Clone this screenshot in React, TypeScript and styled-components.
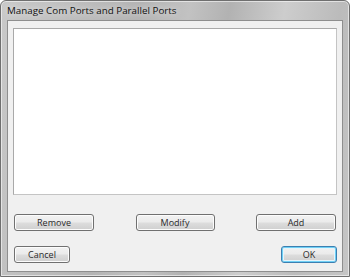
import styled, { createGlobalStyle } from 'styled-components';

const GlobalStyle = createGlobalStyle`
  html, body {
    margin: 0;
    padding: 0;
    background: #ffffff;
  }
  body {
    font-family: "Open Sans", "Noto Sans", "Liberation Sans", sans-serif;
  }
`;

const Window = styled.div`
  width: 350px;
  height: 277px;
  box-sizing: border-box;
  display: flex;
  flex-direction: column;
  border: 1px solid #6f6f6f;
  border-radius: 6px 6px 0 0;
  background: linear-gradient(
    100deg,
    #c9c9c9 0%,
    #bdbdbd 20%,
    #b4b4b4 35%,
    #c2c2c2 48%,
    #b2b2b2 58%,
    #cdcdcd 72%,
    #bbbbbb 86%,
    #c6c6c6 100%
  );
  box-shadow: inset 0 0 0 1px rgba(255, 255, 255, 0.55);
  padding: 0 6px 4px 6px;
`;

const TitleBar = styled.div`
  height: 21px;
  display: flex;
  align-items: center;
  font-size: 9.8px;
  color: #111111;
  text-shadow: 0 0 6px rgba(255, 255, 255, 0.9);
`;

const Client = styled.div`
  flex: 1;
  display: flex;
  flex-direction: column;
  background: #f0f0f0;
  border: 1px solid #8e8e8e;
  padding: 7px 5px 8px 5px;
`;

const ListBox = styled.div`
  height: 165px;
  background: #ffffff;
  border: 1px solid #a9a9a9;
  border-right-color: #c4c4c4;
  border-bottom-color: #c4c4c4;
`;

const ButtonRow = styled.div<{ $top: number; $inset: number }>`
  display: flex;
  justify-content: space-between;
  margin-top: ${(p) => p.$top}px;
  padding: 0 ${(p) => p.$inset}px 0 1px;
`;

const Button = styled.button<{ $w: number; $default?: boolean }>`
  width: ${(p) => p.$w}px;
  height: 17px;
  box-sizing: border-box;
  padding: 0;
  margin: 0;
  font-family: "Open Sans", "Noto Sans", "Liberation Sans", sans-serif;
  font-size: 9px;
  line-height: 1;
  color: #2a2a2a;
  border-radius: 3px;
  border: 1px solid ${(p) => (p.$default ? '#3c7fb1' : '#707070')};
  background: linear-gradient(
    to bottom,
    #f2f2f2 0%,
    #ebebeb 48%,
    #dddddd 52%,
    #cfcfcf 100%
  );
  box-shadow: ${(p) =>
    p.$default
      ? 'inset 0 0 0 1px #6fd0f5, inset 0 0 0 2px #e6f4fb'
      : 'inset 0 0 0 1px #fcfcfc'};
  cursor: default;
`;

export default function App() {
  return (
    <>
      <GlobalStyle />
      <Window>
        <TitleBar>Manage Com Ports and Parallel Ports</TitleBar>
        <Client>
          <ListBox />
          <ButtonRow $top={19} $inset={1}>
            <Button $w={80}>Remove</Button>
            <Button $w={79}>Modify</Button>
            <Button $w={80}>Add</Button>
          </ButtonRow>
          <ButtonRow $top={15} $inset={0}>
            <Button $w={56}>Cancel</Button>
            <Button $w={56} $default>
              OK
            </Button>
          </ButtonRow>
        </Client>
      </Window>
    </>
  );
}
